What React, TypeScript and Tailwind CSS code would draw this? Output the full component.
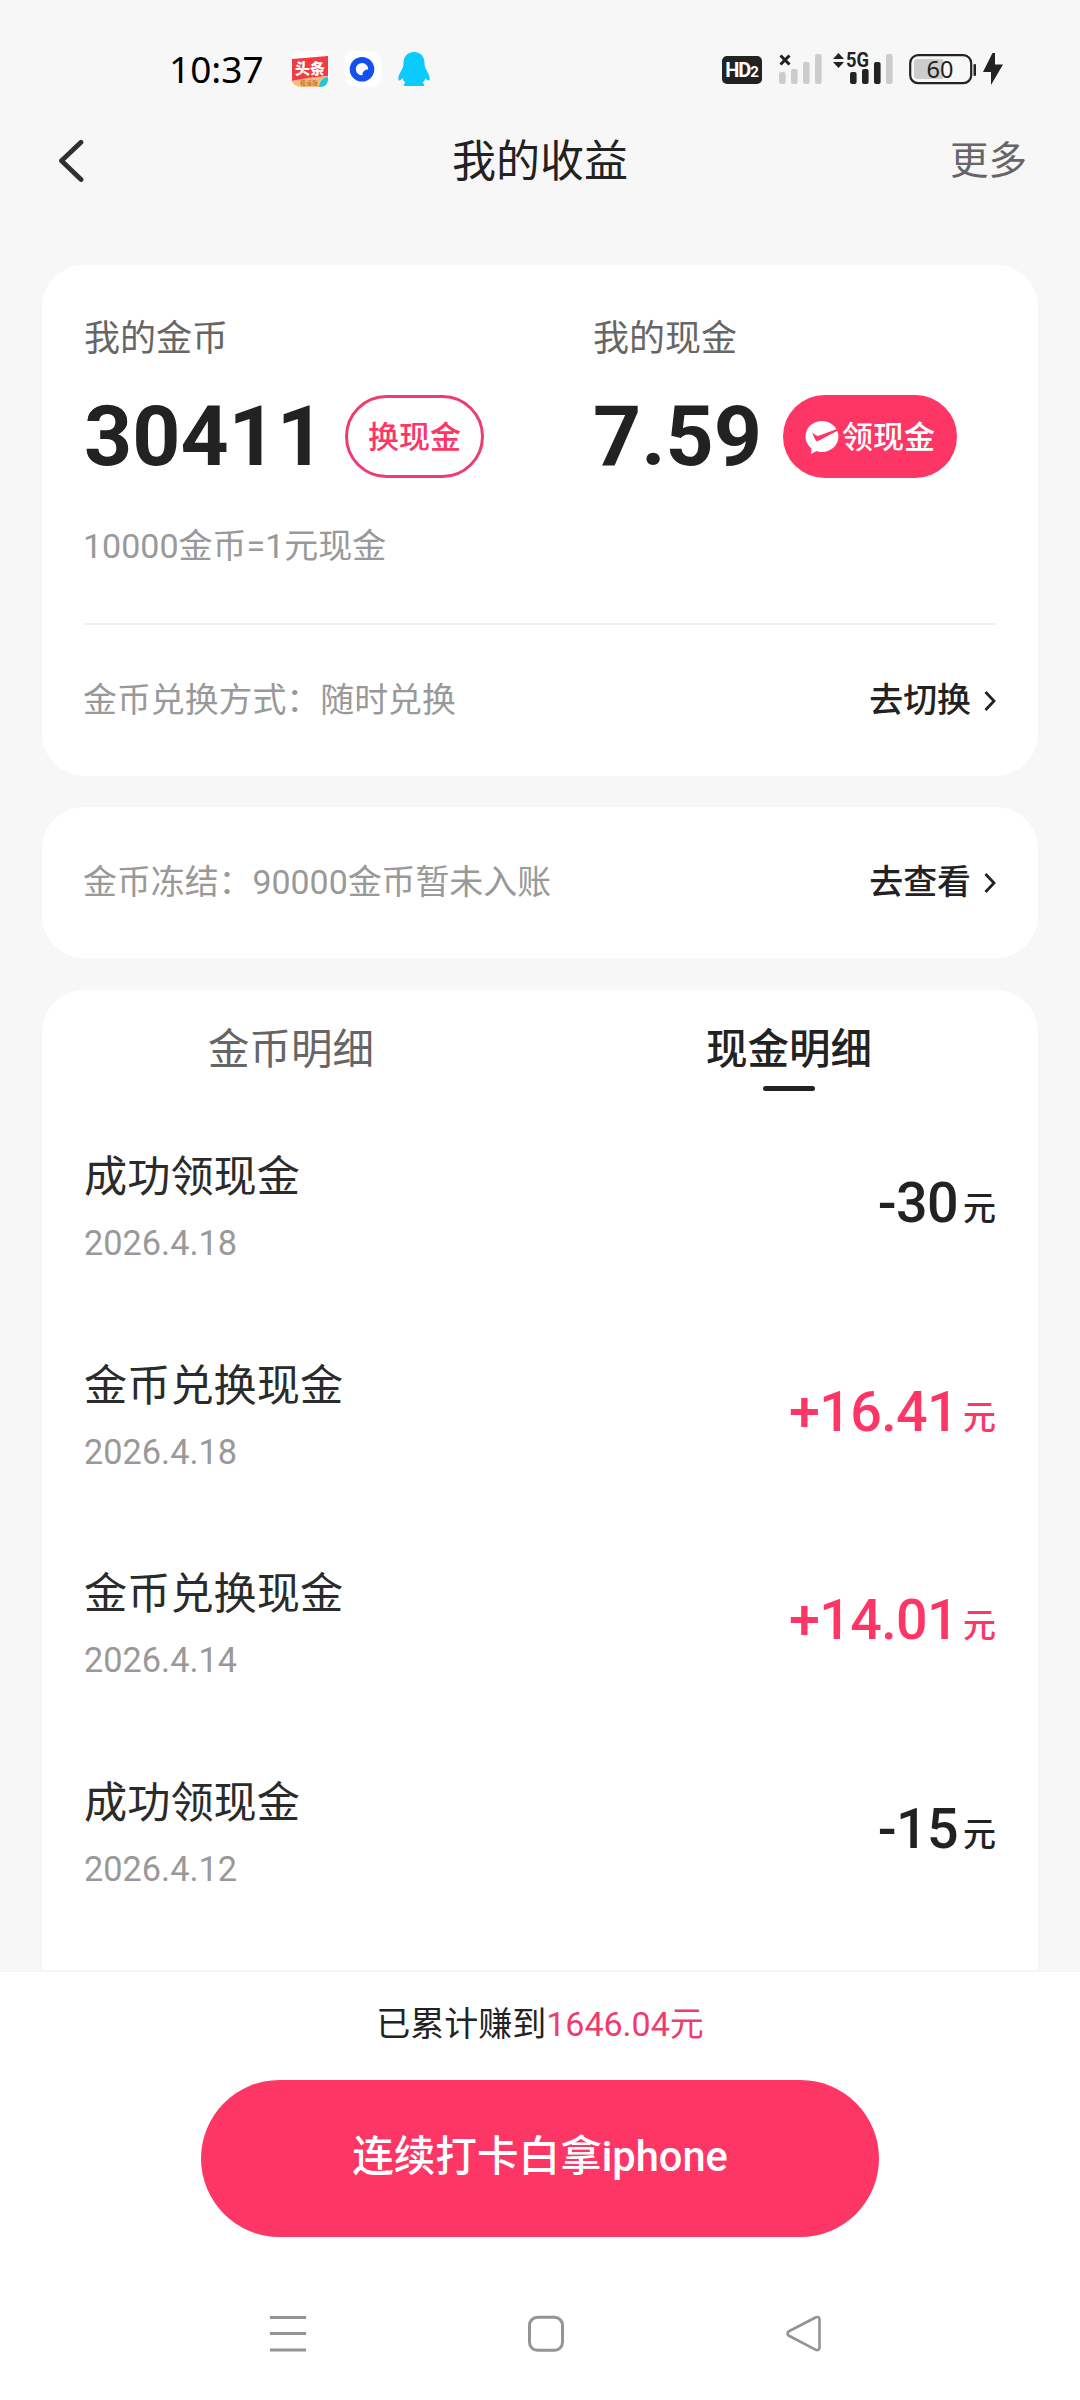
import type { ReactNode } from 'react'
import clsx from 'clsx'

type CashRecord = {
  id: number
  title: string
  date: string
  amount: string
  income: boolean
}

const records: CashRecord[] = [
  { id: 1, title: '成功领现金', date: '2026.4.18', amount: '-30', income: false },
  { id: 2, title: '金币兑换现金', date: '2026.4.18', amount: '+16.41', income: true },
  { id: 3, title: '金币兑换现金', date: '2026.4.14', amount: '+14.01', income: true },
  { id: 4, title: '成功领现金', date: '2026.4.12', amount: '-15', income: false },
]

function SignalBars({ x, levels }: { x: number; levels: number }) {
  const tops = [21, 18, 11, 3]
  return (
    <>
      {tops.map((top, i) => (
        <rect key={top} x={x + i * 12} y={top} width="6.6" height={33 - top} rx="2" fill={i < levels ? '#222' : '#ccc'} />
      ))}
    </>
  )
}

function StatusBar() {
  return (
    <div className="flex h-[138px] items-center justify-between pl-[169px] pr-[76px]">
      <div className="flex items-center">
        <span className="w-[122px] pb-[2px] font-['Noto_Sans',sans-serif] text-[37px] leading-none text-black">10:37</span>
        <svg className="h-9 w-[38px]" viewBox="0 0 38 36">
          <rect x="0" y="0" width="38" height="36" rx="9" fill="#fff" />
          <path d="M1 8 L37 5 V25 L1 30 Z" fill="#f23b43" />
          <path d="M1 30 Q18 26 37 25 Q37 36 28 36 H10 Q2 35 1 30Z" fill="#f6bd7c" />
          <path d="M28 36 Q29 27 37 26 Q38 36 28 36Z" fill="#19c8dc" />
          <text x="19" y="23" textAnchor="middle" fontSize="15" fontWeight="900" fill="#fff" fontFamily="Noto Sans CJK SC, sans-serif">头条</text>
          <text x="18" y="34" textAnchor="middle" fontSize="6" fill="#b5562c" fontFamily="Noto Sans CJK SC, sans-serif">极速版</text>
        </svg>
        <svg className="ml-4 size-9" viewBox="0 0 36 36">
          <rect width="36" height="36" rx="9" fill="#fff" />
          <circle cx="17" cy="18.3" r="12.3" fill="#1250f0" />
          <path d="M17.500 24.300 A6.200 6.200 0 1 1 23.200 18.500 A5 5 0 0 0 17.500 24.300Z" fill="#fff" />
        </svg>
        <svg className="ml-[17px] h-[34px] w-8" viewBox="0 0 32 34">
          <path d="M16 0 C9 0 5.500 5 5.500 11 C5.500 15 4 17 1.500 22 C0 25 0 28 1 28.500 C2 29 3.500 27.500 4.500 26 C5 28 6 29.500 7.500 31 C5.500 31.500 5 34 7 34 H25 C27 34 26.500 31.500 24.500 31 C26 29.500 27 28 27.500 26 C28.500 27.500 30 29 31 28.500 C32 28 32 25 30.500 22 C28 17 26.500 15 26.500 11 C26.500 5 23 0 16 0Z" fill="#0bcafc" />
        </svg>
      </div>

      <div className="flex items-center">
        <div className="mt-[2px] flex h-7 w-10 items-baseline justify-center rounded-[5px] bg-[#222] font-bold text-white">
          <span className="text-[20px] leading-[28px] tracking-[-1px]">HD</span>
          <span className="text-[15px] leading-[15px]">2</span>
        </div>
        <svg className="h-12 w-[242px]" viewBox="40 -6 242 48">
          <path d="M58.500 4.500 L67.500 13.500 M67.500 4.500 L58.500 13.500" stroke="#222" strokeWidth="3" />
          <SignalBars x={57} levels={0} />

          <path d="M111 8 L116.500 2 L122 8Z M111 11 L116.500 17 L122 11Z" fill="#222" />
          <text x="124" y="16" fontSize="20" fontWeight="700" fill="#222" fontFamily="Roboto, sans-serif" textLength="23" lengthAdjust="spacingAndGlyphs">5G</text>
          <SignalBars x={128} levels={3} />

          <rect x="188.200" y="4.200" width="61" height="28" rx="8" fill="none" stroke="#222" strokeWidth="2.200" />
          <path d="M196 8 H221 V28 H196 Q192 28 192 24 V12 Q192 8 196 8Z" fill="#ccc" />
          <text x="218" y="27" textAnchor="middle" fontSize="23.500" fill="#222" fontFamily="Noto Sans, sans-serif">60</text>
          <rect x="251.500" y="13" width="2.500" height="12" rx="1" fill="#222" />
          <path d="M270.500 2 L261 21 H269 V34 L281 13.500 H273 V2Z" fill="#222" />
        </svg>
      </div>
    </div>
  )
}

function ChevronRight() {
  return (
    <svg className="h-5 w-3" viewBox="0 0 12 20" fill="none" stroke="#222" strokeWidth="2.8">
      <path d="M1.500 1 L10 10 L1.500 19" />
    </svg>
  )
}

function InfoRow({ label, action }: { label: string; action: string }) {
  return (
    <div className="flex h-[151px] items-center justify-between text-[33.9px] leading-[50px]">
      <span className="-ml-px text-[#999]">{label}</span>
      <button className="flex items-center gap-[13px] font-medium">
        {action}
        <ChevronRight />
      </button>
    </div>
  )
}

function Balance({ label, value, children }: { label: string; value: string; children: ReactNode }) {
  return (
    <div>
      <p className="text-[36px] leading-[54px] text-[#666]">{label}</p>
      <div className="mt-[29px] flex h-[83px] items-center">
        <span className="text-[84px] font-bold leading-none">{value}</span>
        {children}
      </div>
    </div>
  )
}

function RecordRow({ record }: { record: CashRecord }) {
  return (
    <li className="flex h-[208.6px] justify-between">
      <div>
        <p className="text-[43.2px] leading-[64px] text-[#2b2b2b]">{record.title}</p>
        <p className="mt-[8px] text-[34.3px] leading-[50px] text-[#999]">{record.date}</p>
      </div>
      <p className={clsx('mt-[22px] flex font-medium', record.income ? 'text-[#fe3666]' : 'text-[#222]')}>
        <span className="text-[55.6px] leading-[70px] tracking-[-0.6px]">{record.amount}</span>
        <span className="ml-[5px] pt-[6px] text-[33px] leading-[70px]">元</span>
      </p>
    </li>
  )
}

export default function App() {
  return (
    <div className="flex h-[2400px] w-[1080px] flex-col overflow-hidden bg-[#f7f7f7] font-[Roboto,'Noto_Sans_CJK_SC',sans-serif] text-[#222]">
      <StatusBar />

      <header className="grid h-11 grid-cols-3 items-center px-[53px]">
        <svg className="h-11 w-8" viewBox="-2 0 32 44" fill="none" stroke="#2f2f2f" strokeWidth="4.8" strokeLinecap="round" strokeLinejoin="round">
          <path d="M26 3.300 L6.500 21.800 L26 40.500" />
        </svg>
        <h1 className="pt-[2px] text-center text-[44px] leading-[44px]">我的收益</h1>
        <span className="text-right text-[38.5px] leading-[44px] text-[#666]">更多</span>
      </header>

      <main className="mt-[83px] flex min-h-0 flex-1 flex-col px-[42px]">
        <section className="h-[511px] shrink-0 rounded-[42px] bg-white px-[42px] pt-[47px]">
          <div className="grid grid-cols-[509px_1fr]">
            <Balance label="我的金币" value="30411">
              <button className="ml-[20px] flex h-[83px] w-[139px] items-center justify-center rounded-full border-3 border-[#ee3c6e] pt-[3px] text-[31px] font-medium text-[#fe3666]">
                换现金
              </button>
            </Balance>
            <Balance label="我的现金" value="7.59">
              <button className="ml-[21px] flex h-[83px] w-[174px] items-center justify-center gap-[3px] rounded-full bg-[#fe3666] text-[31px] font-medium text-white">
                <svg className="mt-[2px] h-[33px] w-[34px]" viewBox="0 0 34 33">
                  <path d="M17 0 C7.500 0 0.500 7 0.500 15.500 C0.500 20.500 3 24.500 6.500 27.500 L6 33 L11.500 30 C13 30.600 15 31 17 31 C26 31 33.500 24 33.500 15.500 C33.500 7 26 0 17 0Z" fill="#fff" />
                  <path d="M7.500 11.500 Q10 14.500 13 15 L32 8 L33 9.500 L12 20.500 Q9 18 7.500 11.500Z" fill="#fe3666" />
                </svg>
                <span className="pt-[3px]">领现金</span>
              </button>
            </Balance>
          </div>
          <p className="-ml-px mt-[43px] text-[34px] leading-[50px] text-[#999]">10000金币=1元现金</p>
          <div className="mt-[52px] h-0.5 bg-[#f0f0f0]" />
          <InfoRow label="金币兑换方式：随时兑换" action="去切换" />
        </section>

        <section className="mt-[31px] h-[151px] shrink-0 rounded-[42px] bg-white px-[42px]">
          <InfoRow label="金币冻结：90000金币暂未入账" action="去查看" />
        </section>

        <section className="mt-8 min-h-0 flex-1 overflow-hidden rounded-t-[42px] bg-white">
          <div className="grid h-[101px] grid-cols-2 text-center text-[41.5px]">
            <button className="flex flex-col items-center pt-[29px] leading-[62px] text-[#666]">金币明细</button>
            <button className="flex flex-col items-center pt-[29px] font-medium leading-[62px]">
              现金明细
              <span className="mt-[5px] h-[5px] w-[52px] shrink-0 rounded-full bg-[#222]" />
            </button>
          </div>
          <ul className="px-[42px] pt-[55px]">
            {records.map((r) => (
              <RecordRow key={r.id} record={r} />
            ))}
          </ul>
        </section>
      </main>

      <footer className="flex h-[430px] shrink-0 flex-col items-center border-t-2 border-[#f5f5f5] bg-white">
        <p className="mt-[27px] text-[34px] leading-[50px]">
          已累计赚到<span className="text-[#ee3c6e]">1646.04元</span>
        </p>
        <button className="mt-[31px] h-[157px] w-[678px] rounded-full bg-[#fe3666] pb-[2px] text-[41.6px] font-medium text-white">
          连续打卡白拿iphone
        </button>
        <nav className="mt-[77px] flex w-full items-center justify-between pl-[269px] pr-[257px]">
          <svg className="h-[38px] w-[38px]" viewBox="0 0 38 38" stroke="#949494" strokeWidth="3">
            <path d="M1 3.500 H37 M1 19.500 H37 M1 36 H37" />
          </svg>
          <svg className="h-[38px] w-[38px]" viewBox="0 0 38 38" fill="none" stroke="#949494" strokeWidth="3">
            <rect x="2.500" y="3.300" width="33" height="33" rx="8" />
          </svg>
          <svg className="h-[38px] w-[38px]" viewBox="0 0 38 38" fill="none" stroke="#949494" strokeWidth="2.600" strokeLinejoin="round">
            <path d="M3.500 17.500 Q1.500 19.500 3.500 21.500 L30.500 35.700 Q34 37 34.500 34 V5 Q34 2 30.500 3.500Z" />
          </svg>
        </nav>
      </footer>
    </div>
  )
}
